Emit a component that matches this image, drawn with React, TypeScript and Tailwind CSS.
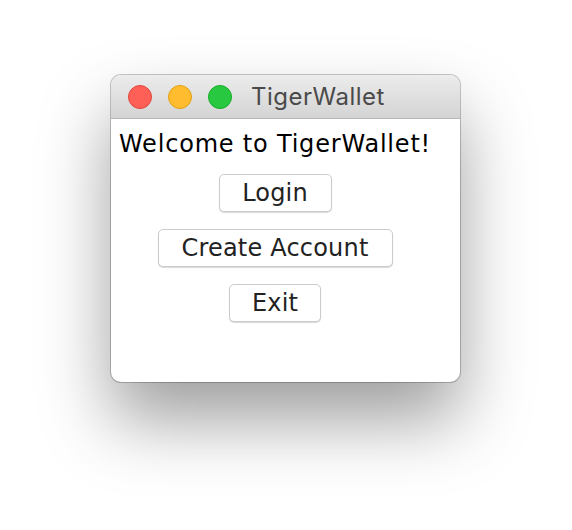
const BUTTONS = [
  { label: "Login", width: "w-[113px]" },
  { label: "Create Account", width: "w-[235px]" },
  { label: "Exit", width: "w-[92px]" },
];

function TrafficLight({ color, border }: { color: string; border: string }) {
  return <span className={`w-6 h-6 rounded-full border ${color} ${border}`} />;
}

export default function App() {
  return (
    <div
      className="w-[572px] h-[530px] bg-white pt-[75px] pl-[111px]"
      style={{ fontFamily: '"DejaVu Sans", "Liberation Sans", sans-serif' }}
    >
      <div className="w-[349px] h-[307px] flex flex-col rounded-[10px] bg-white overflow-hidden shadow-[0_0_0_1px_rgba(0,0,0,0.22),0_38px_70px_rgba(0,0,0,0.38)]">
        {/* Title bar */}
        <div className="h-[44px] shrink-0 flex items-center pl-[17px] border-b border-[#b8b8b8] bg-gradient-to-b from-[#ececec] to-[#d4d4d4]">
          <div className="flex items-center gap-4">
            <TrafficLight color="bg-[#fe5f57]" border="border-[#e2463f]" />
            <TrafficLight color="bg-[#febc2e]" border="border-[#e1a116]" />
            <TrafficLight color="bg-[#28c840]" border="border-[#14ae29]" />
          </div>
          <span className="ml-[19px] font-['Inter'] text-[24px] tracking-[0.5px] text-[#4a4a4a] leading-none">TigerWallet</span>
        </div>

        {/* Content */}
        <div className="flex-1 pl-2 pt-[11px]">
          <div className="w-[312px] flex flex-col items-center">
            <p className="self-start text-[24px] leading-[28px] tracking-[0.8px] text-black whitespace-nowrap">Welcome to TigerWallet!</p>
            <div className="mt-[16px] flex flex-col items-center gap-[17px]">
              {BUTTONS.map(({ label, width }) => (
                <button
                  key={label}
                  className={`${width} h-[38px] rounded-[5px] border border-[#cbcbcb] bg-white text-[24px] leading-[28px] tracking-[0.2px] text-[#222] shadow-[0_1px_1px_rgba(0,0,0,0.15)]`}
                >
                  {label}
                </button>
              ))}
            </div>
          </div>
        </div>
      </div>
    </div>
  );
}
